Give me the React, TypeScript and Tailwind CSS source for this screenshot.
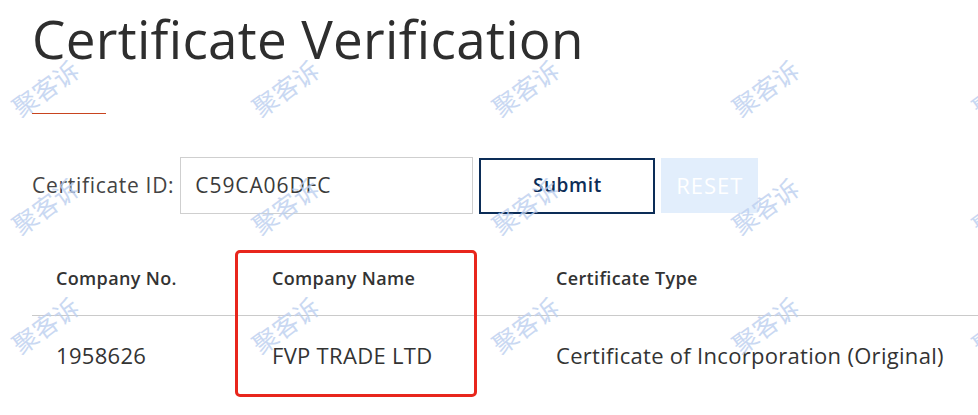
import React from "react";

const WATERMARK_COLS = [45, 285, 525, 765, 1005];
const WATERMARK_ROWS = [88, 206, 325, 443];

function Watermarks() {
  return (
    <div className="pointer-events-none absolute inset-0 overflow-hidden">
      {WATERMARK_ROWS.map((y) =>
        WATERMARK_COLS.map((x) => (
          <span
            key={`${x}-${y}`}
            className="absolute whitespace-nowrap text-[25px] leading-none text-[#bccff0] opacity-80 [font-family:'Noto_Sans_CJK_SC',sans-serif]"
            style={{ left: x, top: y, transform: "translate(-50%, -50%) rotate(-36deg)" }}
          >
            聚客诉
          </span>
        ))
      )}
    </div>
  );
}

export default function App() {
  return (
    <div className="relative h-[415px] w-[978px] overflow-hidden bg-white text-[#333] [font-family:'Open_Sans','Liberation_Sans',sans-serif]">
      <div className="pl-[32px] pt-[6px]">
        <h1 className="text-[53px] font-normal leading-[66px] tracking-[0.3px] text-[#2e2e2e]">
          Certificate Verification
        </h1>
        <div className="mt-[41px] h-px w-[74px] bg-[#c8441f]" />

        <div className="mt-[43px] flex items-center">
          <span className="text-[21px] tracking-[0.7px] text-[#444]">Certificate ID:</span>
          <div className="ml-[6px] flex h-[57px] w-[293px] items-center border border-[#cfcfcf] px-[14px] text-[21px] tracking-[0.9px] text-[#3a3a3a]">
            C59CA06DFC
          </div>
          <button className="ml-[6px] h-[56px] w-[176px] border-2 border-[#0c2d57] text-[19px] font-semibold tracking-[0.6px] text-[#0c2d57]">
            Submit
          </button>
          <button className="ml-[6px] h-[55px] w-[97px] bg-[#e2eefc] text-[22px] tracking-[1px] text-white">
            RESET
          </button>
        </div>

        <div className="mt-[27px]">
          <div className="grid h-[75px] grid-cols-[216px_284px_1fr] items-center border-b border-[#cacaca] pl-[24px] text-[18px] font-semibold tracking-[0.35px] text-[#333]">
            <span>Company No.</span>
            <span>Company Name</span>
            <span>Certificate Type</span>
          </div>
          <div className="grid h-[79px] grid-cols-[216px_284px_1fr] items-center pl-[24px] text-[22px] font-normal tracking-[0.3px] text-[#333]">
            <span>1958626</span>
            <span>FVP TRADE LTD</span>
            <span>Certificate of Incorporation (Original)</span>
          </div>
        </div>
      </div>

      <div className="pointer-events-none absolute left-[235px] top-[250px] h-[147px] w-[242px] rounded-[5px] border-[3px] border-[#e8261c]" />

      <Watermarks />
    </div>
  );
}
